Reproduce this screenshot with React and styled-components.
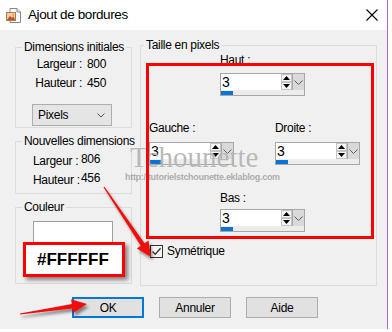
import React from 'react';
import styled, { createGlobalStyle } from 'styled-components';

const GlobalStyle = createGlobalStyle`
  html, body {
    margin: 0;
    padding: 0;
    background: #fff;
  }
  body {
    font-family: "Liberation Sans", Arial, sans-serif;
    font-size: 12px;
    letter-spacing: -0.3px;
    color: #000;
  }
`;

// arrow polygon from tail to tip, tapering like a hand-drawn marker arrow
function arrowPoints(x1, y1, x2, y2, head = 15, hw = 7, sw = 2.2, tw = 0.6) {
  const dx = x2 - x1;
  const dy = y2 - y1;
  const len = Math.hypot(dx, dy);
  const ux = dx / len;
  const uy = dy / len;
  const nx = -uy;
  const ny = ux;
  const bx = x2 - ux * head;
  const by = y2 - uy * head;
  const pts = [
    [x1 + nx * tw, y1 + ny * tw],
    [bx + nx * sw, by + ny * sw],
    [bx + nx * hw, by + ny * hw],
    [x2, y2],
    [bx - nx * hw, by - ny * hw],
    [bx - nx * sw, by - ny * sw],
    [x1 - nx * tw, y1 - ny * tw],
  ];
  return pts.map(p => p.map(v => v.toFixed(1)).join(',')).join(' ');
}

const FieldSpin = ({ label, gap }) => (
  <Field>
    <FieldLabel $gap={gap}>{label}</FieldLabel>
    <Spin>
      <SpinMain>
        <SpinInput>3</SpinInput>
        <SpinArrows>
          <ArrowBtn>
            <svg width="7" height="4" viewBox="0 0 7 4"><path d="M0 4 L3.5 0 L7 4 Z" fill="#000" /></svg>
          </ArrowBtn>
          <ArrowBtn>
            <svg width="7" height="4" viewBox="0 0 7 4"><path d="M0 0 L3.5 4 L7 0 Z" fill="#000" /></svg>
          </ArrowBtn>
        </SpinArrows>
        <DropBtn>
          <svg width="9" height="5" viewBox="0 0 9 5"><path d="M0.5 0.5 L4.5 4.5 L8.5 0.5" fill="none" stroke="#606060" strokeWidth="1" /></svg>
        </DropBtn>
      </SpinMain>
      <SpinTrack>
        <SpinFill style={{ width: 12 }} />
      </SpinTrack>
    </Spin>
  </Field>
);

function App() {
  return (
    <Page>
      <GlobalStyle />
      <Window>
        <TitleBar>
          <svg width="17" height="17" viewBox="0 0 17 17">
            <path d="M5 1.5 H12 L15.5 5 V15.5 H5 Z" fill="#fafafa" stroke="#8a8a8a" />
            <path d="M12 1.5 V5 H15.5" fill="#e8e8e8" stroke="#8a8a8a" />
            <rect x="1.5" y="5.5" width="9" height="8" fill="#f3c9a6" stroke="#b07a55" />
            <path d="M2 13 L5 9 L7 11 L8.5 9.5 L10 13 Z" fill="#c0502a" />
            <circle cx="8" cy="7.8" r="1" fill="#e8a040" />
          </svg>
          <Title>Ajout de bordures</Title>
          <CloseBox>
            <svg width="12" height="12" viewBox="0 0 12 12">
              <path d="M0.5 0.5 L11.5 11.5 M11.5 0.5 L0.5 11.5" stroke="#000" strokeWidth="1.1" />
            </svg>
          </CloseBox>
        </TitleBar>

        <Body>
          <Main>
            <LeftCol>
              <Group $h={88}>
                <Legend>Dimensions initiales</Legend>
                <InfoGrid $labelW={66} $align="right" $gap={5} $pt={2}>
                  <span>Largeur :</span><span>800</span>
                  <span>Hauteur :</span><span>450</span>
                </InfoGrid>
                <Select>
                  Pixels
                  <svg width="8" height="5" viewBox="0 0 8 5"><path d="M0.5 0.5 L4 4 L7.5 0.5" fill="none" stroke="#555" /></svg>
                </Select>
              </Group>
              <Group $h={60}>
                <Legend>Nouvelles dimensions</Legend>
                <InfoGrid $labelW={48} $align="left" $gap={0} $pt={5} $pl={17}>
                  <span>Largeur :</span><Value>806</Value>
                  <span>Hauteur :</span><Value>456</Value>
                </InfoGrid>
              </Group>
              <Group $h={84}>
                <Legend>Couleur</Legend>
                <Swatch />
              </Group>
            </LeftCol>

            <Group $h={248} $w={237}>
              <Legend $indent={3}>Taille en pixels</Legend>
              <SizeArea>
                <Centered>
                  <FieldSpin label="Haut :" gap={6} />
                </Centered>
                <SideRow>
                  <FieldSpin label="Gauche :" gap={7} />
                  <FieldSpin label="Droite :" gap={7} />
                </SideRow>
                <Centered $mt={26}>
                  <FieldSpin label="Bas :" gap={4} />
                </Centered>
                <CheckRow>
                  <CheckBox>
                    <svg width="11" height="11" viewBox="0 0 11 11">
                      <path d="M1.5 5.5 L4.2 8.3 L9.6 2.2" fill="none" stroke="#333" strokeWidth="1.3" />
                    </svg>
                  </CheckBox>
                  Symétrique
                </CheckRow>
              </SizeArea>
            </Group>
          </Main>

          <Buttons>
            <Button $primary>OK</Button>
            <Button>Annuler</Button>
            <Button>Aide</Button>
          </Buttons>
        </Body>
      </Window>

      <Watermark>
        <WatermarkName>Tchounette</WatermarkName>
        <WatermarkUrl>http://tutorielstchounette.eklablog.com</WatermarkUrl>
      </Watermark>

      <RedFrame />

      <Callout>#FFFFFF</Callout>

      <ArrowLayer width="392" height="332" viewBox="0 0 392 332">
        <defs>
          <filter id="arrowShadow" x="-20%" y="-20%" width="140%" height="140%">
            <feDropShadow dx="2" dy="3" stdDeviation="1.6" floodColor="#000" floodOpacity="0.45" />
          </filter>
        </defs>
        <g fill="#f01010" filter="url(#arrowShadow)">
          <polygon points={arrowPoints(104, 187, 151, 257)} />
          <polygon points={arrowPoints(20, 314, 87, 304)} />
        </g>
      </ArrowLayer>
    </Page>
  );
}

const Page = styled.div`
  position: relative;
  width: 392px;
  height: 332px;
  overflow: hidden;
  background: #fff;
`;

const Window = styled.div`
  width: 387px;
  height: 329px;
  border-right: 1px solid #a964cc;
  display: flex;
  flex-direction: column;
`;

const TitleBar = styled.div`
  height: 30px;
  flex: none;
  display: flex;
  align-items: center;
  padding-left: 5px;
  background: #fff;
`;

const Title = styled.div`
  flex: 1;
  margin-left: 6px;
  font-size: 13.5px;
  letter-spacing: -0.4px;
  line-height: 18px;
`;

const CloseBox = styled.div`
  width: 30px;
  height: 30px;
  display: flex;
  align-items: center;
  justify-content: center;
`;

const Body = styled.div`
  flex: 1;
  background: #f0f0f0;
  padding: 8px 0 0 15px;
  display: flex;
  flex-direction: column;
`;

const Main = styled.div`
  display: flex;
  align-items: flex-start;
  gap: 8px;
`;

const LeftCol = styled.div`
  width: 117px;
  margin-top: 2px;
  display: flex;
  flex-direction: column;
  gap: 6px;
`;

const Group = styled.fieldset`
  box-sizing: border-box;
  margin: 0;
  padding: 0;
  min-width: 0;
  border: 1px solid #dcdcdc;
  height: ${p => p.$h}px;
  width: ${p => (p.$w ? `${p.$w}px` : 'auto')};
`;

const Legend = styled.legend`
  margin-left: ${p => (p.$indent ?? 6)}px;
  padding: 0 2px;
  line-height: 14px;
  white-space: nowrap;
`;

const InfoGrid = styled.div`
  display: grid;
  grid-template-columns: ${p => p.$labelW}px auto;
  column-gap: ${p => p.$gap}px;
  row-gap: 3px;
  padding: ${p => p.$pt}px 0 0 ${p => p.$pl || 0}px;
  line-height: 16px;
  white-space: nowrap;
  > span:nth-child(odd) {
    text-align: ${p => p.$align};
  }
`;

const Value = styled.span`
  position: relative;
  top: -2px;
`;

const Select = styled.div`
  box-sizing: border-box;
  width: 80px;
  height: 22px;
  margin: 13px 0 0 16px;
  padding: 0 6px 0 5px;
  border: 1px solid #adadad;
  background: #e5e5e5;
  display: flex;
  align-items: center;
  justify-content: space-between;
`;

const Swatch = styled.div`
  width: 80px;
  height: 52px;
  margin: 7px 0 0 17px;
  box-sizing: border-box;
  border: 1px solid #a0a0a0;
  background: #fff;
`;

const SizeArea = styled.div`
  padding-top: 1px;
  display: flex;
  flex-direction: column;
`;

const Centered = styled.div`
  padding-left: 79px;
  margin-top: ${p => p.$mt || 0}px;
`;

const SideRow = styled.div`
  display: flex;
  gap: 41px;
  padding-left: 8px;
  margin-top: 25px;
`;

const Field = styled.div`
  display: flex;
  flex-direction: column;
`;

const FieldLabel = styled.div`
  line-height: 14px;
  margin-bottom: ${p => p.$gap}px;
`;

const Spin = styled.div`
  box-sizing: border-box;
  width: 85px;
  height: 23px;
  border: 1px solid #a7a7a7;
  background: #efefef;
  display: flex;
  flex-direction: column;
`;

const SpinMain = styled.div`
  height: 16px;
  display: flex;
`;

const SpinInput = styled.div`
  flex: 1;
  background: #fff;
  font-size: 14px;
  letter-spacing: 0;
  line-height: 16px;
  padding-left: 1px;
`;

const SpinArrows = styled.div`
  width: 11px;
  display: flex;
  flex-direction: column;
  background: #fff;
`;

const ArrowBtn = styled.div`
  flex: 1;
  box-sizing: border-box;
  border: 1px solid #c4c4c4;
  background: #f4f4f4;
  display: flex;
  align-items: center;
  justify-content: center;
`;

const DropBtn = styled.div`
  width: 13px;
  margin-top: -1px;
  margin-right: -1px;
  height: 18px;
  box-sizing: border-box;
  border: 1px solid #a7a7a7;
  background: #d9d9d9;
  display: flex;
  align-items: center;
  justify-content: center;
`;

const SpinTrack = styled.div`
  flex: 1;
  padding: 1px 0 0;
  background: #ececec;
`;

const SpinFill = styled.div`
  height: 4px;
  background: #0a74d4;
`;

const CheckRow = styled.label`
  display: flex;
  align-items: center;
  gap: 4px;
  margin-top: 12px;
  padding-left: 9px;
  line-height: 14px;
`;

const CheckBox = styled.span`
  box-sizing: border-box;
  width: 13px;
  height: 13px;
  border: 1px solid #333;
  background: #f4f4f4;
  display: flex;
  align-items: center;
  justify-content: center;
`;

const Buttons = styled.div`
  display: flex;
  gap: 15px;
  margin-top: 11px;
  padding-left: 57px;
`;

const Button = styled.div`
  box-sizing: border-box;
  width: 72px;
  height: 21px;
  border: ${p => (p.$primary ? '2px solid #0078d7' : '1px solid #adadad')};
  background: #e1e1e1;
  display: flex;
  align-items: center;
  justify-content: center;
`;

const Watermark = styled.div`
  position: absolute;
  left: 125px;
  top: 142px;
  display: flex;
  flex-direction: column;
  align-items: flex-start;
  pointer-events: none;
`;

const WatermarkName = styled.div`
  margin-left: 5px;
  font-family: "Liberation Serif", "Times New Roman", serif;
  font-size: 29px;
  letter-spacing: 0;
  line-height: 31px;
  color: rgba(115, 115, 115, 0.5);
  text-shadow: 0 0 1px rgba(255, 255, 255, 0.9);
`;

const WatermarkUrl = styled.div`
  font-weight: bold;
  font-size: 9px;
  letter-spacing: -0.3px;
  line-height: 9px;
  color: rgba(110, 110, 110, 0.55);
`;

const RedFrame = styled.div`
  position: absolute;
  left: 146px;
  top: 63px;
  width: 228px;
  height: 176px;
  box-sizing: border-box;
  border: 3px solid #f00;
`;

const Callout = styled.div`
  position: absolute;
  left: 23px;
  top: 242px;
  width: 102px;
  height: 35px;
  box-sizing: border-box;
  border: 3px solid #f00;
  background: #fff;
  box-shadow: 3px 3px 4px rgba(0, 0, 0, 0.45);
  padding-left: 11px;
  display: flex;
  align-items: center;
  font-weight: bold;
  font-size: 17px;
  letter-spacing: 0;
`;

const ArrowLayer = styled.svg`
  position: absolute;
  left: 0;
  top: 0;
  pointer-events: none;
`;

export default App;
